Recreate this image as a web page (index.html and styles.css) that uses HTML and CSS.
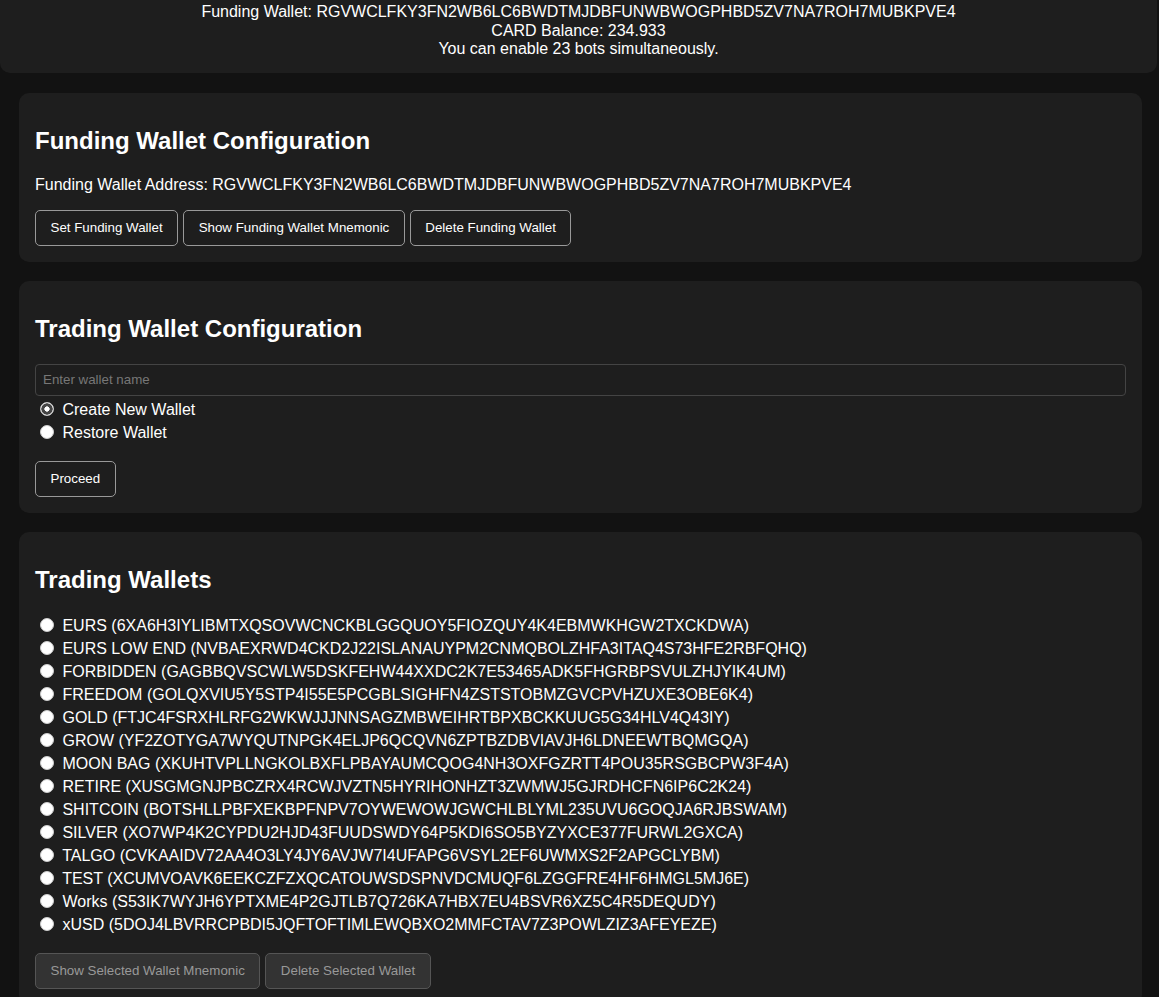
FILE: index.html
```html
<!DOCTYPE html>
<html lang="en">

<head>
    <meta charset="UTF-8">
    <meta name="viewport" content="width=device-width, initial-scale=1.0">
    <title>Wallet Manager</title>
    <link rel="stylesheet" href="styles.css">
</head>

<body>

    <div class="header">
        <div>Funding Wallet: RGVWCLFKY3FN2WB6LC6BWDTMJDBFUNWBWOGPHBD5ZV7NA7ROH7MUBKPVE4</div>
        <div>CARD Balance: 234.933</div>
        <div>You can enable 23 bots simultaneously.</div>
    </div>

    <div class="container">
        <div class="card">
            <h2>Funding Wallet Configuration</h2>
            <p class="address">Funding Wallet Address: RGVWCLFKY3FN2WB6LC6BWDTMJDBFUNWBWOGPHBD5ZV7NA7ROH7MUBKPVE4</p>
            <div class="btn-row">
                <button>Set Funding Wallet</button>
                <button>Show Funding Wallet Mnemonic</button>
                <button>Delete Funding Wallet</button>
            </div>
        </div>

        <div class="card">
            <h2>Trading Wallet Configuration</h2>
            <input type="text" class="wallet-name" placeholder="Enter wallet name">
            <div class="radio-list modes">
                <label><input type="radio" name="mode" value="create" checked> Create New Wallet</label>
                <label><input type="radio" name="mode" value="restore"> Restore Wallet</label>
            </div>
            <div class="btn-row">
                <button>Proceed</button>
            </div>
        </div>

        <div class="card">
            <h2>Trading Wallets</h2>
            <div class="radio-list wallets">
                <label><input type="radio" name="wallet"> EURS (6XA6H3IYLIBMTXQSOVWCNCKBLGGQUOY5FIOZQUY4K4EBMWKHGW2TXCKDWA)</label>
                <label><input type="radio" name="wallet"> EURS LOW END (NVBAEXRWD4CKD2J22ISLANAUYPM2CNMQBOLZHFA3ITAQ4S73HFE2RBFQHQ)</label>
                <label><input type="radio" name="wallet"> FORBIDDEN (GAGBBQVSCWLW5DSKFEHW44XXDC2K7E53465ADK5FHGRBPSVULZHJYIK4UM)</label>
                <label><input type="radio" name="wallet"> FREEDOM (GOLQXVIU5Y5STP4I55E5PCGBLSIGHFN4ZSTSTOBMZGVCPVHZUXE3OBE6K4)</label>
                <label><input type="radio" name="wallet"> GOLD (FTJC4FSRXHLRFG2WKWJJJNNSAGZMBWEIHRTBPXBCKKUUG5G34HLV4Q43IY)</label>
                <label><input type="radio" name="wallet"> GROW (YF2ZOTYGA7WYQUTNPGK4ELJP6QCQVN6ZPTBZDBVIAVJH6LDNEEWTBQMGQA)</label>
                <label><input type="radio" name="wallet"> MOON BAG (XKUHTVPLLNGKOLBXFLPBAYAUMCQOG4NH3OXFGZRTT4POU35RSGBCPW3F4A)</label>
                <label><input type="radio" name="wallet"> RETIRE (XUSGMGNJPBCZRX4RCWJVZTN5HYRIHONHZT3ZWMWJ5GJRDHCFN6IP6C2K24)</label>
                <label><input type="radio" name="wallet"> SHITCOIN (BOTSHLLPBFXEKBPFNPV7OYWEWOWJGWCHLBLYML235UVU6GOQJA6RJBSWAM)</label>
                <label><input type="radio" name="wallet"> SILVER (XO7WP4K2CYPDU2HJD43FUUDSWDY64P5KDI6SO5BYZYXCE377FURWL2GXCA)</label>
                <label><input type="radio" name="wallet"> TALGO (CVKAAIDV72AA4O3LY4JY6AVJW7I4UFAPG6VSYL2EF6UWMXS2F2APGCLYBM)</label>
                <label><input type="radio" name="wallet"> TEST (XCUMVOAVK6EEKCZFZXQCATOUWSDSPNVDCMUQF6LZGGFRE4HF6HMGL5MJ6E)</label>
                <label><input type="radio" name="wallet"> Works (S53IK7WYJH6YPTXME4P2GJTLB7Q726KA7HBX7EU4BSVR6XZ5C4R5DEQUDY)</label>
                <label><input type="radio" name="wallet"> xUSD (5DOJ4LBVRRCPBDI5JQFTOFTIMLEWQBXO2MMFCTAV7Z3POWLZIZ3AFEYEZE)</label>
            </div>
            <div class="btn-row">
                <button disabled>Show Selected Wallet Mnemonic</button>
                <button disabled>Delete Selected Wallet</button>
            </div>
        </div>
    </div>

</body>

</html>
```

FILE: styles.css
```css
body {
    background-color: #121212;
    color: #fff;
    font-family: "Liberation Sans", Arial, sans-serif;
    font-size: 16px;
    margin: 0;
    padding: 0;
}

.header {
    background-color: #1e1e1e;
    border-radius: 0 0 10px 10px;
    text-align: center;
    line-height: 18.5px;
    padding: 3px 0 14px;
    margin-right: 2px;
}

.container {
    padding: 20px 17px 0 19px;
}

.card {
    background-color: #1e1e1e;
    border-radius: 10px;
    padding: 16px;
    margin-bottom: 19px;
}

h2 {
    font-size: 24px;
    margin: 18px 0 21px;
}

.address {
    margin: 0 0 16px;
}

.btn-row {
    display: flex;
    gap: 5px;
}

button {
    background-color: #1e1e1e;
    color: #fff;
    border: 1px solid #999;
    border-radius: 5px;
    padding: 0 14.5px;
    height: 36px;
    font-family: "Liberation Sans", Arial, sans-serif;
    font-size: 13.33px;
    cursor: pointer;
}

button:disabled {
    background-color: #333;
    border-color: #555;
    color: #999;
    cursor: default;
}

.wallet-name {
    display: block;
    box-sizing: border-box;
    width: 100%;
    height: 32px;
    padding: 0 7px;
    background-color: #1e1e1e;
    border: 1px solid #444;
    border-radius: 4px;
    color: #fff;
    font-family: "Liberation Sans", Arial, sans-serif;
    font-size: 13.33px;
}

.wallet-name::placeholder {
    color: #777;
}

.radio-list {
    display: flex;
    flex-direction: column;
    margin-bottom: 16px;
}

.radio-list label {
    display: flex;
    align-items: center;
    height: 23px;
    white-space: pre;
}

.modes {
    margin-top: 3px;
}

.wallets {
    margin-top: 3px;
    margin-bottom: 16px;
}

input[type="radio"] {
    appearance: none;
    flex-shrink: 0;
    width: 14px;
    height: 14px;
    margin: -3px 4px 0 5px;
    border-radius: 50%;
    background-color: #fff;
    border: 1px solid #ccc;
}

input[type="radio"]:checked {
    background: radial-gradient(circle, #fff 0, #fff 28%, #444 34%, #444 64%, #fff 70%);
}
```
